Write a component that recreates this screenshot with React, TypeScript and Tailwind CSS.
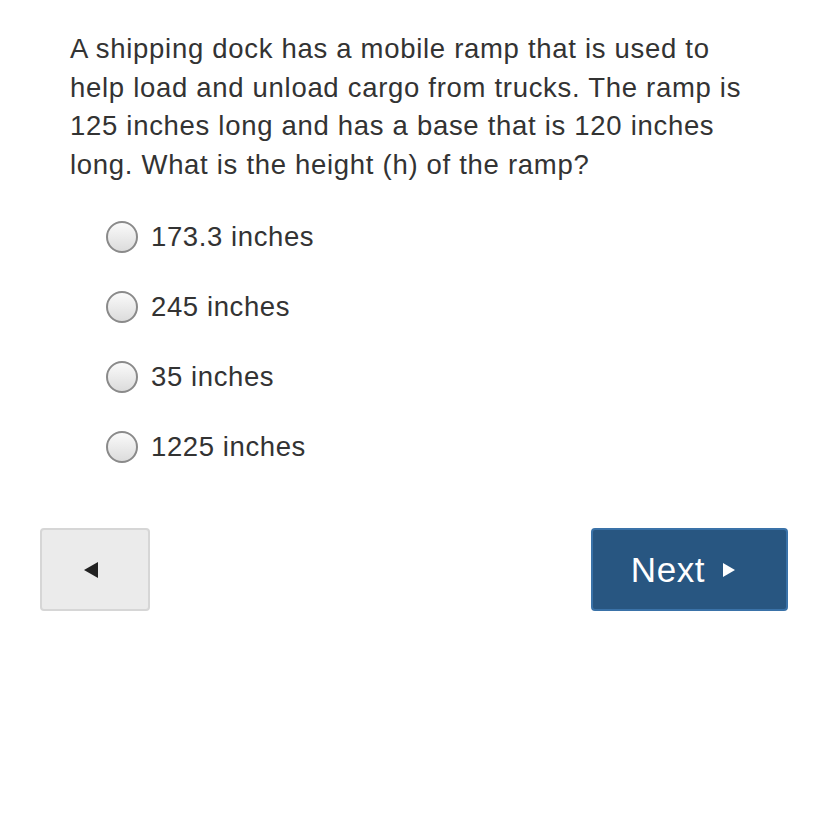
import React from 'react';

const options = ['173.3 inches', '245 inches', '35 inches', '1225 inches'];

const App: React.FC = () => {
  return (
    <div className="w-[828px] h-[828px] bg-white text-[#333333]" style={{ fontFamily: '"Liberation Sans", Arial, sans-serif' }}>
      <div className="pt-[30px] pl-[70px] pr-[40px]">
        <p className="text-[27.5px] leading-[38.5px] tracking-[0.7px] whitespace-nowrap">
          A shipping dock has a mobile ramp that is used to
          <br />
          help load and unload cargo from trucks. The ramp is
          <br />
          125 inches long and has a base that is 120 inches
          <br />
          long. What is the height (h) of the ramp?
        </p>
      </div>
      <div className="mt-[37px] pl-[106px] flex flex-col gap-[38px]">
        {options.map((opt) => (
          <label key={opt} className="flex items-center gap-[13px] h-[32px]">
            <span className="w-[32px] h-[32px] rounded-full border-2 border-[#8a8a8a] bg-gradient-to-b from-[#fafafa] to-[#dcdcdc]" />
            <span className="text-[27.5px] leading-none tracking-[0.6px]">{opt}</span>
          </label>
        ))}
      </div>
      <div className="mt-[65px] px-[40px] flex justify-between">
        <button className="w-[110px] h-[83px] rounded-[4px] bg-[#ebebeb] border-2 border-[#d6d6d6] flex items-center justify-center pr-[8px]">
          <svg width="16" height="18" viewBox="0 0 16 18">
            <path d="M15 1 L1 9 L15 17 Z" fill="#222222" />
          </svg>
        </button>
        <button className="w-[197px] h-[83px] rounded-[4px] bg-[#285681] border-2 border-[#3a72a8] flex items-center justify-center gap-[17px] pr-[12px] text-white">
          <span className="text-[35px] leading-none tracking-[0.6px]">Next</span>
          <svg width="14" height="16" viewBox="0 0 14 16">
            <path d="M1 1 L13 8 L1 15 Z" fill="#ffffff" />
          </svg>
        </button>
      </div>
    </div>
  );
};

export default App;
